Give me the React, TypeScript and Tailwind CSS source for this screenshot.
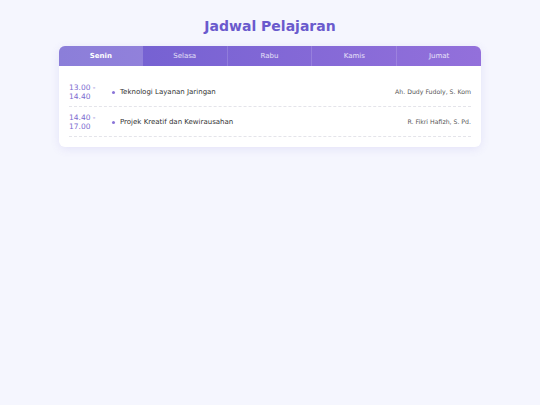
import React from "react";

const days = ["Senin", "Selasa", "Rabu", "Kamis", "Jumat"];
const rows = [
  { time: ["13.00 -", "14.40"], subject: "Teknologi Layanan Jaringan", teacher: "Ah. Dudy Fudoly, S. Kom" },
  { time: ["14.40 -", "17.00"], subject: "Projek Kreatif dan Kewirausahan", teacher: "R. Fikri Hafizh, S. Pd." },
];

export default function App() {
  return (
    <div className="min-h-[405px] w-[540px] bg-[#f5f6fe] pt-[16px]" style={{ fontFamily: '"DejaVu Sans", Verdana, sans-serif' }}>
      <h1 className="text-center text-[14px] font-bold leading-[20px] text-[#6a5acd]">Jadwal Pelajaran</h1>
      <div className="mx-[59px] mt-[10px] overflow-hidden rounded-[6px] bg-white shadow-[0_2px_10px_rgba(106,90,205,0.12)]">
        <div className="flex h-[20px] bg-gradient-to-r from-[#6f5ed0] to-[#9370db]">
          {days.map((d, i) => (
            <div
              key={d}
              className={
                "flex flex-1 items-center justify-center text-[7px] " +
                (i === 0 ? "bg-white/20 font-bold text-white" : "text-white/80") +
                (i > 1 ? " border-l border-white/15" : "")
              }
            >
              {d}
            </div>
          ))}
        </div>
        <div className="px-[10px] pt-[11px] pb-[10px]">
          {rows.map((r) => (
            <div key={r.subject} className="flex items-center border-b border-dashed border-[#e4e4ea] pt-[6px] pb-[5px]">
              <div className="w-[43px] text-[7.5px] leading-[9px] text-[#7b6bd0]">
                <div>{r.time[0]}</div>
                <div>{r.time[1]}</div>
              </div>
              <div className="mr-[5px] h-[3px] w-[3px] rounded-full bg-[#8a75d8]" />
              <div className="flex-1 text-[7px] text-[#333]">{r.subject}</div>
              <div className="text-[6.2px] text-[#555]">{r.teacher}</div>
            </div>
          ))}
        </div>
      </div>
    </div>
  );
}
